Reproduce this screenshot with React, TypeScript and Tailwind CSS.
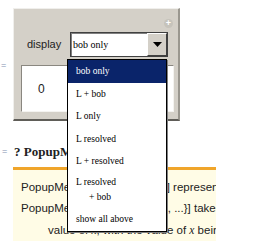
import React from 'react'

const SERIF = { fontFamily: '"Liberation Serif", "Times New Roman", serif' }

const items: { label: React.ReactNode; h: string }[] = [
  { label: 'bob only', h: 'h-[22.5px]' },
  { label: 'L + bob', h: 'h-[22.5px]' },
  { label: 'L only', h: 'h-[22.5px]' },
  { label: 'L resolved', h: 'h-[22.5px]' },
  { label: 'L + resolved', h: 'h-[22.5px]' },
  {
    label: (
      <span className="flex flex-col leading-[15px]">
        <span>L resolved</span>
        <span className="pl-[13px]">+ bob</span>
      </span>
    ),
    h: 'h-[35px]',
  },
  { label: 'show all above', h: 'h-[23px]' },
]

function PopupList() {
  return (
    <div
      className="absolute left-[67px] top-[59px] w-[100px] bg-white border border-black shadow-[1px_1px_0_#808080] text-[9.5px] text-black"
      style={SERIF}
    >
      {items.map((it, i) => (
        <div
          key={i}
          className={`${it.h} flex items-center pl-[8px] ${i === 0 ? 'bg-[#0a246a] text-white' : ''}`}
        >
          {it.label}
        </div>
      ))}
    </div>
  )
}

const Sub = ({ children }: { children: React.ReactNode }) => (
  <span className="text-[8px] leading-none align-[-2px]">{children}</span>
)

export default function App() {
  return (
    <div
      className="relative w-[261px] h-[241px] bg-white overflow-hidden"
      style={{ fontFamily: '"Liberation Sans", Arial, sans-serif' }}
    >
      <div className="flex pt-[8px]">
        {/* cell label gutter */}
        <div className="w-[13px] pt-[52px] pl-[1px] text-[9px] leading-[10px] text-[#7f8fb0]">=</div>

        {/* control panel */}
        <div className="relative w-[167px] h-[113px] bg-[#d4d0c8] border-t border-l border-t-[#f0efec] border-l-[#f0efec] border-r-2 border-b-2 border-r-[#9a978f] border-b-[#5f5d58] pt-[23px] pl-[7px] pr-[5px]">
          <span className="absolute right-[5px] top-[10px] w-[9px] h-[9px] rounded-full bg-[#c6c3bb] flex items-center justify-center text-white text-[9px] leading-none font-bold">
            +
          </span>

          <div className="flex items-center h-[25px]">
            <span className="w-[49px] pl-[6px] text-[11px] text-[#222]">display</span>
            <div className="flex h-[25px] w-[98px] border border-[#404040] shadow-[inset_1px_1px_0_#808080] bg-white">
              <span className="flex-1 flex items-center pl-[2px] text-[10px] text-black" style={SERIF}>
                bob only
              </span>
              <span className="w-[20px] bg-[#d4d0c8] border-t border-l border-t-white border-l-white border-r border-b border-r-[#404040] border-b-[#404040] flex items-center justify-center">
                <svg width="9" height="5" viewBox="0 0 9 5">
                  <polygon points="0,0 9,0 4.5,5" fill="#000" />
                </svg>
              </span>
            </div>
          </div>

          <div className="mt-[8px] h-[47px] w-[153px] bg-white border-t border-l border-t-[#8a8780] border-l-[#8a8780] border-r border-b border-r-[#f4f3f0] border-b-[#f4f3f0] flex items-center pl-[16px] text-[12px] text-[#222]">
            0
          </div>
        </div>
      </div>

      {/* help query */}
      <div className="flex items-center h-[30px] mt-[16px]">
        <span className="w-[14px] pl-[2px] text-[9px] text-[#7f8fb0]">=</span>
        <span className="text-[13px] font-bold text-[#222]" style={SERIF}>? PopupMenu</span>
      </div>

      <div className="ml-[13px] w-[203px] h-[80px] bg-[#fffce6] border-t-[3px] border-t-[#f0a52a] text-[11.5px] text-[#222] pt-[7px] whitespace-nowrap overflow-hidden">
        <div className="h-[21px] leading-[21px] pl-[8px]">
          PopupMenu[x, {'{'}val<Sub>1</Sub>, val<Sub>2</Sub>, ...{'}'}] represents
        </div>
        <div className="h-[21px] leading-[21px] pl-[8px]">
          PopupMen<span className="tracking-[-0.35px]">u[Dynamic[x], {'{'}val1</span>, ...{'}'}] takes
        </div>
        <div className="h-[22px] leading-[22px] pl-[35px]">
          value of <i style={SERIF}>x</i>, with the value of <i style={SERIF}>x</i> being
        </div>
      </div>

      <PopupList />
    </div>
  )
}
